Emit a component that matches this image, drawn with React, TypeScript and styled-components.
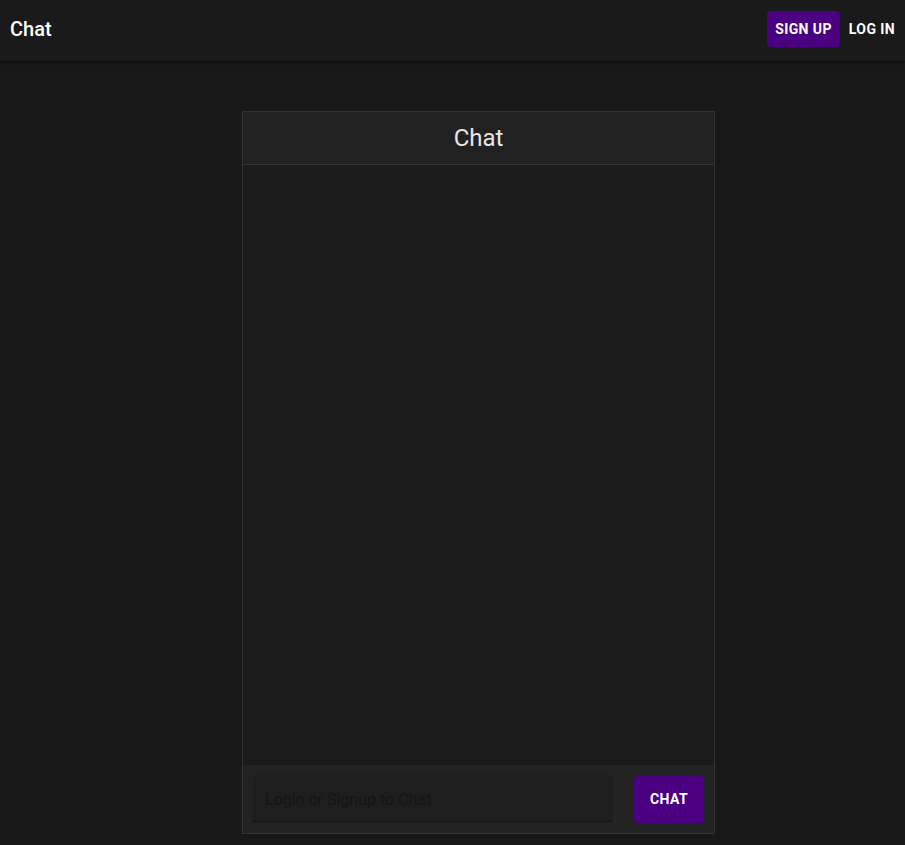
import React from "react";
import styled, { createGlobalStyle } from "styled-components";

const Global = createGlobalStyle`
  html, body { margin: 0; padding: 0; background: #181818; }
  body { font-family: Roboto, "Liberation Sans", sans-serif; color: #fff; }
  * { box-sizing: border-box; }
`;

const Page = styled.div`
  min-height: 845px;
  background: #181818;
`;

const NavBar = styled.header`
  height: 61px;
  display: flex;
  align-items: center;
  justify-content: space-between;
  padding: 0 10px;
  background: #1a1a1a;
  box-shadow: 0 2px 4px -1px rgba(0,0,0,0.35), 0 1px 2px rgba(0,0,0,0.25);
  position: relative;
  z-index: 1;
`;

const Brand = styled.div`
  font-size: 20px;
  font-weight: 500;
  color: #fff;
  margin-top: -4px;
`;

const NavActions = styled.div`
  display: flex;
  align-items: center;
  gap: 9px;
  margin-top: -4px;
`;

const NavButton = styled.button<{ $filled?: boolean }>`
  height: 36px;
  padding: 0 ${(p) => (p.$filled ? "8px" : "0")};
  border: none;
  border-radius: 4px;
  background: ${(p) => (p.$filled ? "#4b0082" : "transparent")};
  color: #fff;
  font-family: Roboto, "Liberation Sans", sans-serif;
  font-size: 14px;
  font-weight: 700;
  text-transform: uppercase;
  letter-spacing: 0.4px;
  cursor: pointer;
`;

const Main = styled.main`
  padding: 50px 0 0 242px;
`;

const Card = styled.section`
  width: 473px;
  border: 1px solid #333;
  display: flex;
  flex-direction: column;
`;

const CardHeader = styled.div`
  height: 53px;
  display: flex;
  align-items: center;
  justify-content: center;
  background: #212121;
  border-bottom: 1px solid #333;
  font-size: 24px;
  color: #e6e6e6;
`;

const Messages = styled.div`
  height: 600px;
  background: #1b1b1b;
`;

const Footer = styled.form`
  height: 68px;
  display: flex;
  align-items: flex-start;
  gap: 21px;
  padding: 10px 9px 0 10px;
  background: #222;
`;

const Input = styled.input`
  width: 360px;
  height: 47px;
  padding: 2px 12px 0;
  background: #1e1e1e;
  border: none;
  border-bottom: 1px dotted #0e0e0e;
  border-radius: 4px 4px 0 0;
  font-family: Roboto, "Liberation Sans", sans-serif;
  font-size: 16px;
  color: #151515;
  outline: none;
  opacity: 1;
  &::placeholder { color: #151515; opacity: 1; }
`;

const SendButton = styled.button`
  width: 70px;
  height: 47px;
  margin-top: 1px;
  padding: 0 0 2px;
  border: none;
  border-radius: 4px;
  background: #4b0082;
  color: #fff;
  font-family: Roboto, "Liberation Sans", sans-serif;
  font-size: 14px;
  font-weight: 700;
  letter-spacing: 0.4px;
  text-transform: uppercase;
  cursor: pointer;
`;

export default function App() {
  return (
    <Page>
      <Global />
      <NavBar>
        <Brand>Chat</Brand>
        <NavActions>
          <NavButton $filled>Sign Up</NavButton>
          <NavButton>Log In</NavButton>
        </NavActions>
      </NavBar>
      <Main>
        <Card>
          <CardHeader>Chat</CardHeader>
          <Messages />
          <Footer onSubmit={(e) => e.preventDefault()}>
            <Input readOnly placeholder="Login or Signup to Chat" />
            <SendButton type="submit">Chat</SendButton>
          </Footer>
        </Card>
      </Main>
    </Page>
  );
}
